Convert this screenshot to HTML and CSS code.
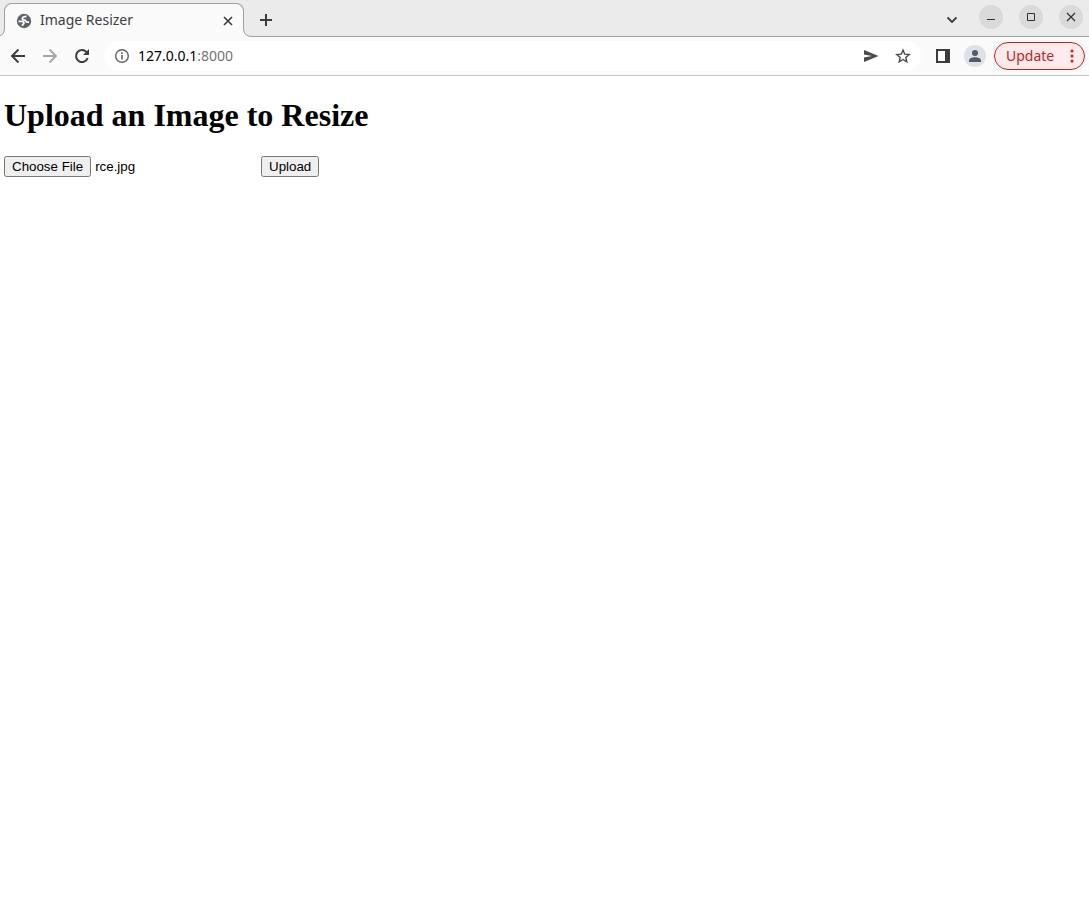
FILE: index.html
```html
<!DOCTYPE html>
<html lang="en">
<head>
<meta charset="utf-8">
<title>Image Resizer</title>
<link rel="stylesheet" href="styles.css">
</head>
<body>
<header class="browser">
  <div class="tab-strip">
    <div class="tab">
      <svg class="flare flare-left" viewBox="0 0 9 9" width="9" height="9"><path d="M9 0V9H0V8.500Q8.500 8.500 8.500 0Z" fill="#fafafa"/><path d="M0 8.500Q8.500 8.500 8.500 0" fill="none" stroke="#a0a0a0"/></svg>
      <svg class="globe" viewBox="0 0 16 16" width="16" height="16"><circle cx="8" cy="8" r="7.200" fill="#5f6368"/><path d="M10.500 3.300C8 3.300 6.300 4.400 6.300 5.500S7.500 7 8.800 7.200s.8 2 2.400 2H13M2.500 8.300h3c1.800 0 2.500.8 2.500 1.800s-1.200.9-1.400 1.700L6.400 13" fill="none" stroke="#fafafa" stroke-width="1.700"/></svg>
      <span class="tab-title">Image Resizer</span>
      <button class="icon-button" aria-label="Close tab"><svg viewBox="0 0 16 16" width="16" height="16"><path d="M4 4l8 8M12 4l-8 8" stroke="#3c4043" stroke-width="1.700"/></svg></button>
      <svg class="flare flare-right" viewBox="0 0 9 9" width="9" height="9"><path d="M0 0V9H9V8.500Q.5 8.500 .5 0Z" fill="#fafafa"/><path d="M9 8.500Q.5 8.500 .5 0" fill="none" stroke="#a0a0a0"/></svg>
    </div>
    <button class="icon-button new-tab" aria-label="New tab"><svg viewBox="0 0 16 16" width="16" height="16"><path d="M8 2v12M2 8h12" stroke="#3c3c3c" stroke-width="2"/></svg></button>
    <div class="window-controls">
      <button class="icon-button tab-search" aria-label="Search tabs"><svg viewBox="0 0 16 16" width="16" height="16"><path d="M3.500 5.500L8 10l4.500-4.500" fill="none" stroke="#3c3c3c" stroke-width="1.800"/></svg></button>
      <button class="icon-button window-button" aria-label="Minimize"><svg viewBox="0 0 24 24" width="24" height="24"><path d="M8 14.500h8" stroke="#303030"/></svg></button>
      <button class="icon-button window-button" aria-label="Maximize"><svg viewBox="0 0 24 24" width="24" height="24"><path d="M8.500 8.500h7v7h-7z" fill="none" stroke="#303030"/></svg></button>
      <button class="icon-button window-button" aria-label="Close"><svg viewBox="0 0 24 24" width="24" height="24"><path d="M8 8l8 8M16 8l-8 8" stroke="#303030" stroke-width="1.200"/></svg></button>
    </div>
  </div>
  <div class="toolbar">
    <div class="navigation">
      <button class="icon-button" aria-label="Back"><svg viewBox="0 0 20 20" width="20" height="20"><path d="M17 10H4M10.500 3.500L4 10l6.500 6.500" fill="none" stroke="#3c3c3c" stroke-width="1.900"/></svg></button>
      <button class="icon-button" aria-label="Forward" disabled><svg viewBox="0 0 20 20" width="20" height="20"><path d="M3 10h13M9.500 3.500L16 10l-6.500 6.500" fill="none" stroke="#a6a6a6" stroke-width="1.900"/></svg></button>
      <button class="icon-button" aria-label="Reload"><svg viewBox="0 0 20 20" width="20" height="20"><path d="M15.700 12A6 6 0 1 1 14.400 5.900L16 7.500" fill="none" stroke="#3c3c3c" stroke-width="2"/><path d="M17 3v6h-6z" fill="#3c3c3c"/></svg></button>
    </div>
    <div class="address-bar">
      <svg viewBox="0 0 16 16" width="16" height="16"><circle cx="8" cy="8" r="6.300" fill="none" stroke="#5f6368" stroke-width="1.400"/><path d="M8 7v4.500M8 4.300v1.600" stroke="#5f6368" stroke-width="1.600"/></svg>
      <span class="url">127.0.0.1<span class="port">:8000</span></span>
      <button class="icon-button" aria-label="Share"><svg viewBox="0 0 16 16" width="16" height="16"><path d="M1 2l14.500 6L1 14V9.500L9 8 1 6.500z" fill="#4a4a4a"/></svg></button>
      <button class="icon-button" aria-label="Bookmark"><svg viewBox="0 0 16 16" width="16" height="16"><path d="M8 2l1.700 4.100 4.500.4-3.400 2.900 1 4.400L8 11.500l-3.800 2.300 1-4.400-3.400-2.900 4.500-.4z" fill="none" stroke="#4a4a4a" stroke-width="1.400"/></svg></button>
    </div>
    <button class="icon-button" aria-label="Side panel"><svg viewBox="0 0 16 16" width="16" height="16"><path d="M1 1h14v14H1zM3 3v10h7V3z" fill="#3c3c3c" fill-rule="evenodd"/></svg></button>
    <button class="icon-button profile" aria-label="Profile"><svg viewBox="0 0 22 22" width="22" height="22"><circle cx="11" cy="8" r="3" fill="#515b6c"/><path d="M5 17v-1.500c0-2 3.500-3.200 6-3.200s6 1.200 6 3.200V17z" fill="#515b6c"/></svg></button>
    <button class="update"><span class="update-label">Update</span><svg viewBox="0 0 4 14" width="4" height="14"><circle cx="2" cy="2" r="1.500"/><circle cx="2" cy="7" r="1.500"/><circle cx="2" cy="12" r="1.500"/></svg></button>
  </div>
</header>
<main class="page">
  <h1>Upload an Image to Resize</h1>
  <form class="upload-form">
    <input type="file" id="image" aria-label="Image file">
    <input type="submit" value="Upload">
  </form>
</main>
<script src="script.js"></script>
</body>
</html>
```
FILE: styles.css
```css
body {
  margin: 0;
  background: #fff;
}

.browser {
  font: 14px "Noto Sans", "Open Sans", sans-serif;
}

.icon-button {
  display: flex;
  flex: none;
  align-items: center;
  justify-content: center;
  padding: 0;
  border: 0;
  background: none;
}

.tab-strip {
  display: flex;
  box-sizing: border-box;
  height: 37px;
  padding: 3px 6px 0 4px;
  border-bottom: 1px solid #a0a0a0;
  background: #ebebeb;
}

.tab {
  position: relative;
  display: flex;
  align-items: center;
  box-sizing: border-box;
  width: 240px;
  height: 34px;
  padding: 0 7px 0 11px;
  border: 1px solid #a0a0a0;
  border-bottom: 0;
  border-radius: 8px 8px 0 0;
  background: #fafafa;
}

.flare {
  position: absolute;
  bottom: 0;
}

.flare-left {
  right: 100%;
}

.flare-right {
  left: 100%;
}

.tab-title,
.url,
.update-label {
  padding-bottom: 2px;
}

.tab-title {
  flex: 1;
  margin-left: 8px;
  color: #3c4043;
}

.new-tab {
  width: 28px;
  margin-left: 8px;
}

.window-controls {
  display: flex;
  align-items: start;
  gap: 16px;
  margin-left: auto;
  padding-top: 2px;
}

.tab-search {
  height: 30px;
  margin-right: 3px;
}

.window-button {
  border-radius: 50%;
  background: #dadada;
}

.toolbar {
  display: flex;
  align-items: center;
  gap: 8px;
  box-sizing: border-box;
  height: 39px;
  padding: 0 4px 0 8px;
  border-bottom: 1px solid #c4c4c4;
  background: #fafafa;
}

.navigation {
  display: flex;
  gap: 12px;
}

.address-bar {
  display: flex;
  flex: 1;
  align-items: center;
  gap: 16px;
  height: 30px;
  margin: 0 6px 0 4px;
  padding: 0 10px;
  border-radius: 15px;
  background: #fff;
}

.url {
  flex: 1;
  margin-left: -8px;
  color: #000;
}

.port {
  color: #757575;
}

.profile {
  margin-left: 5px;
  border-radius: 50%;
  background: #dee1e6;
}

.update {
  display: flex;
  align-items: center;
  justify-content: space-between;
  box-sizing: border-box;
  width: 91px;
  height: 28px;
  padding: 0 10px 0 11px;
  border: 1px solid #c5221f;
  border-radius: 14px;
  background: #fcebea;
  color: #c5221f;
  font: inherit;
  fill: #c5221f;
}

.page {
  padding: 0 4px;
  font-family: "Liberation Serif", serif;
}

.page h1 {
  margin: 21px 0 22px;
  font-size: 32px;
  line-height: 37px;
}

.upload-form {
  font-size: 16px;
}

.upload-form input {
  font-family: "Liberation Sans", sans-serif;
}
```
FILE: script.js
```js
const selection = new DataTransfer();
selection.items.add(new File([""], "rce.jpg", { type: "image/jpeg" }));
document.getElementById("image").files = selection.files;
```
